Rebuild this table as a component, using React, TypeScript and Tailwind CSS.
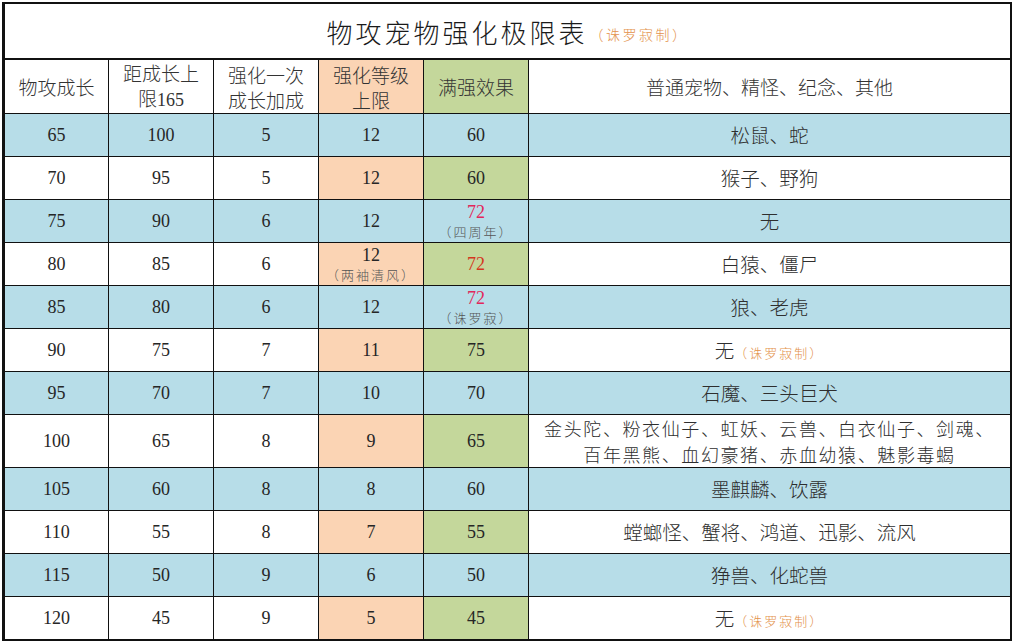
import React from 'react';

type Row = {
  growth: string;
  gap: string;
  step: string;
  level: React.ReactNode;
  full: React.ReactNode;
  pets: React.ReactNode;
  tall?: boolean;
};

const Note: React.FC<{ children: React.ReactNode }> = ({ children }) => (
  <span className="mt-[3px] block font-['Noto_Sans_CJK_SC',sans-serif] text-[13px] font-light leading-[14px] tracking-[2px] text-[#555]">
    {children}
  </span>
);

const Orange: React.FC<{ children: React.ReactNode }> = ({ children }) => (
  <span className="text-[13px] tracking-[2px] text-[#e3914a]">{children}</span>
);

const rows: Row[] = [
  { growth: '65', gap: '100', step: '5', level: '12', full: '60', pets: '松鼠、蛇' },
  { growth: '70', gap: '95', step: '5', level: '12', full: '60', pets: '猴子、野狗' },
  {
    growth: '75',
    gap: '90',
    step: '6',
    level: '12',
    full: (
      <div className="flex flex-col items-center">
        <span className="leading-[19px] text-[#e2265a]">72</span>
        <Note>（四周年）</Note>
      </div>
    ),
    pets: '无',
  },
  {
    growth: '80',
    gap: '85',
    step: '6',
    level: (
      <div className="flex flex-col items-center">
        <span className="leading-[19px]">12</span>
        <Note>（两袖清风）</Note>
      </div>
    ),
    full: <span className="text-[#d4361e]">72</span>,
    pets: '白猿、僵尸',
  },
  {
    growth: '85',
    gap: '80',
    step: '6',
    level: '12',
    full: (
      <div className="flex flex-col items-center">
        <span className="leading-[19px] text-[#e2265a]">72</span>
        <Note>（诛罗寂）</Note>
      </div>
    ),
    pets: '狼、老虎',
  },
  {
    growth: '90',
    gap: '75',
    step: '7',
    level: '11',
    full: '75',
    pets: (
      <span>
        无<Orange>（诛罗寂制）</Orange>
      </span>
    ),
  },
  { growth: '95', gap: '70', step: '7', level: '10', full: '70', pets: '石魔、三头巨犬' },
  {
    growth: '100',
    gap: '65',
    step: '8',
    level: '9',
    full: '65',
    tall: true,
    pets: (
      <span className="block text-[18px] leading-[26px] tracking-[1.6px]">
        金头陀、粉衣仙子、虹妖、云兽、白衣仙子、剑魂、
        <br />
        百年黑熊、血幻豪猪、赤血幼猿、魅影毒蝎
      </span>
    ),
  },
  { growth: '105', gap: '60', step: '8', level: '8', full: '60', pets: '墨麒麟、饮露' },
  { growth: '110', gap: '55', step: '8', level: '7', full: '55', pets: '螳螂怪、蟹将、鸿道、迅影、流风' },
  { growth: '115', gap: '50', step: '9', level: '6', full: '50', pets: '狰兽、化蛇兽' },
  {
    growth: '120',
    gap: '45',
    step: '9',
    level: '5',
    full: '45',
    pets: (
      <span>
        无<Orange>（诛罗寂制）</Orange>
      </span>
    ),
  },
];

const cols = 'grid grid-cols-[104px_105px_105px_105px_105px_481px]';
const cell = 'flex items-center justify-center border-r border-[#111] text-center';

export default function App() {
  return (
    <div className="h-[642px] w-[1014px] overflow-hidden bg-white pl-[2px] pt-[2px] font-['Liberation_Serif','Noto_Sans_CJK_SC',serif] text-[18px] text-[#262626]">
      <div className="w-[1010px] border-l-[3px] border-r-2 border-t-2 border-b-2 border-[#111]">
        {/* title */}
        <div className="flex h-[56px] items-center justify-center border-b-2 border-[#111]">
          <span className="font-['Noto_Sans_CJK_SC',sans-serif] text-[26px] font-light tracking-[3px] text-[#1a1a1a]">物攻宠物强化极限表</span>
          <span className="ml-[2px] mt-[6px] font-['Noto_Sans_CJK_SC',sans-serif] text-[14px] font-light tracking-[2.5px] text-[#e3914a]">（诛罗寂制）</span>
        </div>

        {/* header */}
        <div className={`${cols} h-[54px] border-b border-[#111] font-['Noto_Sans_CJK_SC',sans-serif] text-[19px] font-light leading-[25px] text-[#333]`}>
          <div className={`${cell} bg-white`}>物攻成长</div>
          <div className={`${cell} bg-white`}>
            <span>
              距成长上
              <br />
              限<span className="font-['Liberation_Serif',serif] text-[18px]">165</span>
            </span>
          </div>
          <div className={`${cell} bg-white`}>
            <span>
              强化一次
              <br />
              成长加成
            </span>
          </div>
          <div className={`${cell} bg-[#fbd4b4]`}>
            <span>
              强化等级
              <br />
              上限
            </span>
          </div>
          <div className={`${cell} bg-[#c4d79b]`}>满强效果</div>
          <div className={`${cell} border-r-0 bg-white`}>普通宠物、精怪、纪念、其他</div>
        </div>

        {rows.map((r, i) => {
          const blue = i % 2 === 0;
          const last = i === rows.length - 1;
          const base = blue ? 'bg-[#b7dde8]' : 'bg-white';
          return (
            <div
              key={r.growth}
              className={`${cols} ${r.tall ? 'h-[53px]' : last ? 'h-[42px]' : 'h-[43px]'} ${last ? '' : 'border-b border-[#111]'}`}
            >
              <div className={`${cell} ${base}`}>{r.growth}</div>
              <div className={`${cell} ${base}`}>{r.gap}</div>
              <div className={`${cell} ${base}`}>{r.step}</div>
              <div className={`${cell} ${blue ? base : 'bg-[#fbd4b4]'}`}>{r.level}</div>
              <div className={`${cell} ${blue ? base : 'bg-[#c4d79b]'}`}>{r.full}</div>
              <div className={`${cell} border-r-0 ${base} font-['Noto_Sans_CJK_SC',sans-serif] text-[19.5px] font-light text-[#2e2e2e]`}>
                {r.pets}
              </div>
            </div>
          );
        })}
      </div>
    </div>
  );
}
